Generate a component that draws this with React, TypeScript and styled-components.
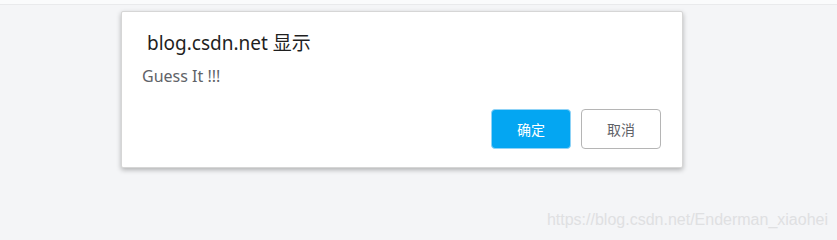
import React from 'react';
import styled, { createGlobalStyle } from 'styled-components';

const GlobalStyles = createGlobalStyle`
    html, body {
        margin: 0;
        padding: 0;
        background: #f4f5f7;
    }
    body {
        font-family: 'Noto Sans', 'Noto Sans CJK SC', sans-serif;
    }
`;

const Page = styled.div`
    position: relative;
    width: 837px;
    height: 238px;
    overflow: hidden;
    background: #f4f5f7;
`;

const TopStrip = styled.div`
    height: 4px;
    background: #fafbfc;
    border-bottom: 1px solid #e9eaec;
`;

const Stage = styled.div`
    padding: 6px 0 0 121px;
`;

const Dialog = styled.div`
    box-sizing: border-box;
    width: 562px;
    height: 157px;
    background: #fff;
    border: 1px solid #d6d6d6;
    border-radius: 2px;
    box-shadow: 0 2px 5px rgba(0, 0, 0, 0.28);
    display: flex;
    flex-direction: column;
    padding: 17px 21px 0 20px;
`;

const Title = styled.div`
    font-size: 19px;
    color: #1f1f1f;
    line-height: 28px;
    padding-left: 5px;
`;

const Message = styled.div`
    margin-top: 8px;
    font-size: 16px;
    color: #5f6368;
    line-height: 22px;
`;

const Actions = styled.div`
    display: flex;
    justify-content: flex-end;
    gap: 10px;
    margin-top: 22px;
`;

const Button = styled.button<{ $primary?: boolean }>`
    box-sizing: border-box;
    width: 80px;
    height: 40px;
    border-radius: 4px;
    font-family: 'Noto Sans CJK SC', sans-serif;
    font-size: 14px;
    cursor: pointer;
    border: 1px solid ${(p) => (p.$primary ? '#8fd3f7' : '#b5b5b5')};
    background: ${(p) => (p.$primary ? '#04a6f2' : '#fff')};
    color: ${(p) => (p.$primary ? '#fff' : '#5f6368')};
`;

const Watermark = styled.div`
    position: absolute;
    right: 9px;
    bottom: 9px;
    font-family: 'Liberation Sans', sans-serif;
    font-size: 16px;
    color: #dfe0e2;
`;

export default function App() {
    return (
        <Page>
            <GlobalStyles />
            <TopStrip />
            <Stage>
                <Dialog>
                    <Title>blog.csdn.net 显示</Title>
                    <Message>Guess It !!!</Message>
                    <Actions>
                        <Button $primary>确定</Button>
                        <Button>取消</Button>
                    </Actions>
                </Dialog>
            </Stage>
            <Watermark>https://blog.csdn.net/Enderman_xiaohei</Watermark>
        </Page>
    );
}
